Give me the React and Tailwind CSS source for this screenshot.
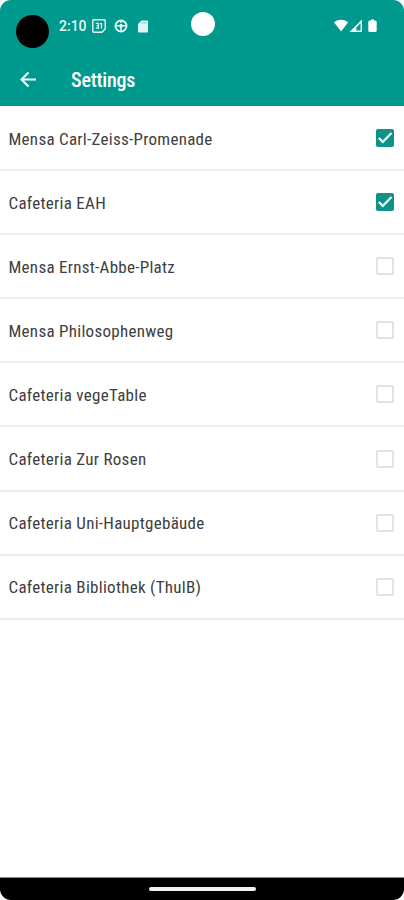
import React from 'react';

const locations = [
    { name: 'Mensa Carl-Zeiss-Promenade', checked: true },
    { name: 'Cafeteria EAH', checked: true },
    { name: 'Mensa Ernst-Abbe-Platz', checked: false },
    { name: 'Mensa Philosophenweg', checked: false },
    { name: 'Cafeteria vegeTable', checked: false },
    { name: 'Cafeteria Zur Rosen', checked: false },
    { name: 'Cafeteria Uni-Hauptgebäude', checked: false },
    { name: 'Cafeteria Bibliothek (ThulB)', checked: false },
];

const CalendarIcon = () => (
    <svg width="14" height="14" viewBox="0 0 14 14" fill="none" stroke="currentColor">
        <path d="M1.7 .8h10.6q.9 0 .9.9v8.2l-3.3 3.3H1.7q-.9 0-.9-.9V1.7q0-.9.9-.9Z" strokeWidth="1.4" />
        <path d="M3.8 4.4h2.6v4.7H3.8M4.6 6.7h1.9M8 4.6h1.5v5" strokeWidth="1.3" />
    </svg>
);

const WheelIcon = () => (
    <svg width="14" height="14" viewBox="0 0 14 14" fill="none" stroke="currentColor">
        <circle cx="7" cy="7" r="5.5" strokeWidth="1.8" />
        <path d="M1.8 6.8h10.4M7 2v2M7 7v5" strokeWidth="1.6" />
        <circle cx="7" cy="6.9" r="1.5" fill="currentColor" strokeWidth="1" />
    </svg>
);

const SdCardIcon = () => (
    <svg width="10" height="13" viewBox="0 0 10 13" fill="currentColor">
        <path d="M3.5 .5H9q1 0 1 1v10q0 1-1 1H1q-1 0-1-1V4Z" />
        <path d="M4.2 2v1.6M6 2v1.6M7.8 2v1.6" stroke="#00998d" strokeWidth=".5" />
    </svg>
);

const Checkbox = ({ checked }) =>
    checked ? (
        <span className="flex h-[18px] w-[18px] items-center justify-center rounded-[2px] bg-[#0e9486]">
            <svg width="18" height="18" viewBox="0 0 18 18" fill="none" stroke="white" strokeWidth="2.1">
                <path d="m2.8 9 4 4 8.7-9" />
            </svg>
        </span>
    ) : (
        <span className="h-[18px] w-[18px] rounded-[2px] border-2 border-[#e2e2e2]" />
    );

const App = () => {
    return (
        <div className="bg-white">
            <div className="flex h-[900px] w-[404px] flex-col overflow-hidden rounded-[11px] bg-white font-['Roboto_Condensed',Roboto,sans-serif] [font-stretch:75%]">
                <header className="h-[106px] bg-[#00998d] text-white">
                    {/* Status bar */}
                    <div className="relative flex h-[53px] items-center pl-[59px] pr-[26px]">
                        <span className="absolute left-4 top-[15px] h-[33px] w-[33px] rounded-full bg-black" />
                        <span className="absolute left-[191px] top-3 h-6 w-6 rounded-full bg-white" />
                        <span className="w-[33px] whitespace-nowrap font-[Roboto,sans-serif] text-[14px] font-medium text-[#e3f5f3] [font-stretch:100%]">2:10</span>
                        <div className="flex items-center gap-2 pb-px text-[#e3f5f3]">
                            <CalendarIcon />
                            <WheelIcon />
                            <span className="ml-[2px]"><SdCardIcon /></span>
                        </div>
                        <svg className="mb-px ml-auto" width="44" height="14" viewBox="0 0 44 14" fill="white">
                            <path d="M0 3.2Q7 -1.7 14.2 3.2L7.1 12.6Z" />
                            <path d="M28 .5V13H15.5ZM26.6 4.2 22.3 8.6v3h4.3Z" fillRule="evenodd" />
                            <path d="M37 .5h3v1h1.2q1.5 0 1.5 1.5v8.5q0 1.5-1.5 1.5h-5.4q-1.5 0-1.5-1.5V3q0-1.5 1.5-1.5H37Z" />
                        </svg>
                    </div>
                    {/* App bar */}
                    <div className="flex h-[53px] items-center pl-5">
                        <svg width="17" height="16" viewBox="0 0 17 16" fill="none" stroke="white" strokeWidth="2">
                            <path d="M16 7.5H2M8.5 .5l-7 7 7 7" />
                        </svg>
                        <h1 className="ml-[34px] text-[20px] font-medium leading-6 tracking-[-0.2px]">Settings</h1>
                    </div>
                </header>

                <ul className="flex-1 pt-px">
                    {locations.map((location) => (
                        <li key={location.name} className="flex h-[64.1px] items-center justify-between border-b-2 border-[#ededed] pl-[8.5px] pr-[10px]">
                            <span className="pt-[3px] text-[17px] tracking-[0.28px] text-[#404040]">{location.name}</span>
                            <Checkbox checked={location.checked} />
                        </li>
                    ))}
                </ul>

                {/* Gesture bar */}
                <footer className="flex h-[23px] items-center justify-center border-t border-[#8a8a8a] bg-black">
                    <span className="h-1 w-[107px] rounded-full bg-[#f2f2f2]" />
                </footer>
            </div>
        </div>
    );
};

export default App;
